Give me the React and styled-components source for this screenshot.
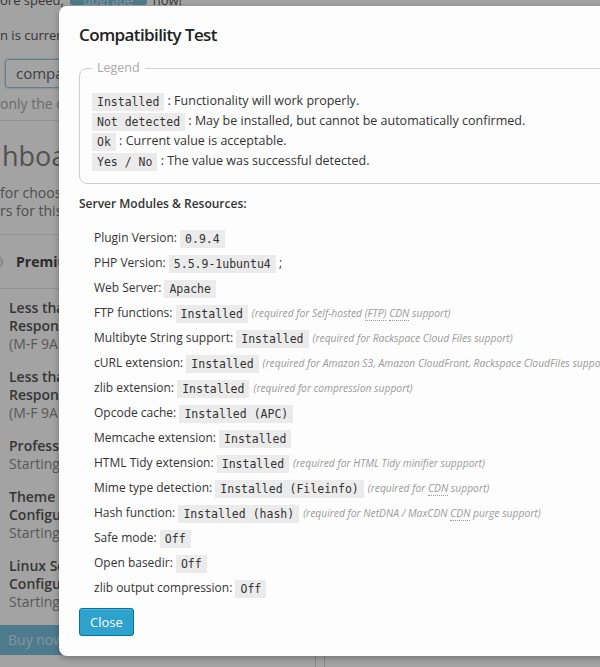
import React from 'react';
import styled, { createGlobalStyle } from 'styled-components';

const GlobalStyle = createGlobalStyle`
  html, body {
    margin: 0;
    padding: 0;
    background: #ffffff;
  }
  body {
    font-family: "Open Sans", "Liberation Sans", sans-serif;
  }
`;

// notes: plain strings, or { abbr } parts that get the dotted underline
const modules = [
  { label: 'Plugin Version:', value: '0.9.4' },
  { label: 'PHP Version:', value: '5.5.9-1ubuntu4', after: ';' },
  { label: 'Web Server:', value: 'Apache' },
  {
    label: 'FTP functions:',
    value: 'Installed',
    note: ['(required for Self-hosted ', { abbr: '(FTP)' }, ' ', { abbr: 'CDN' }, ' support)'],
  },
  {
    label: 'Multibyte String support:',
    value: 'Installed',
    note: ['(required for Rackspace Cloud Files support)'],
  },
  {
    label: 'cURL extension:',
    value: 'Installed',
    note: ['(required for Amazon S3, Amazon CloudFront, Rackspace CloudFiles support)'],
  },
  { label: 'zlib extension:', value: 'Installed', note: ['(required for compression support)'] },
  { label: 'Opcode cache:', value: 'Installed (APC)' },
  { label: 'Memcache extension:', value: 'Installed' },
  {
    label: 'HTML Tidy extension:',
    value: 'Installed',
    note: ['(required for HTML Tidy minifier suppport)'],
  },
  {
    label: 'Mime type detection:',
    value: 'Installed (Fileinfo)',
    note: ['(required for ', { abbr: 'CDN' }, ' support)'],
  },
  {
    label: 'Hash function:',
    value: 'Installed (hash)',
    note: ['(required for NetDNA / MaxCDN ', { abbr: 'CDN' }, ' purge support)'],
  },
  { label: 'Safe mode:', value: 'Off' },
  { label: 'Open basedir:', value: 'Off' },
  { label: 'zlib output compression:', value: 'Off' },
];

const legend = [
  { code: 'Installed', text: 'Functionality will work properly.' },
  { code: 'Not detected', text: 'May be installed, but cannot be automatically confirmed.' },
  { code: 'Ok', text: 'Current value is acceptable.' },
  { code: 'Yes / No', text: 'The value was successful detected.' },
];

const features = [
  { title: ['Less than 15 Minute Email Support', 'Response Time'], sub: '(M-F 9AM - 5PM EDT)' },
  { title: ['Less than 15 Minute Phone Support', 'Response Time'], sub: '(M-F 9AM - 5PM EDT)' },
  { title: ['Professional Plugin Configuration'], sub: 'Starting @ $100 USD' },
  { title: ['Theme Performance Optimization &', 'Configuration'], sub: 'Starting @ $150 USD' },
  { title: ['Linux Server Optimization &', 'Configuration'], sub: 'Starting @ $200 USD' },
];

const App = () => {
  return (
    <>
      <GlobalStyle />
      <Screen>
        {/* page behind the dialog */}
        <Page>
          <TopLine>
            <span>ore speed,</span>
            <Upgrade>upgrade</Upgrade>
            <span>now!</span>
          </TopLine>
          <PageText>n is currently enabled.</PageText>
          <FakeInput>compatibility</FakeInput>
          <Hint>only the directories listed</Hint>
          <Rule $top={6} />
          <BigTitle>hboard</BigTitle>
          <Intro>
            for choosing W3 Total Cache
            <br />
            rs for this plugin.
          </Intro>
          <Rule $top={14} />
          <BoxHead>
            <Dot />
            Premium Services
          </BoxHead>
          <Rule $top={0} />
          <Features>
            {features.map((f, i) => (
              <Feature key={i}>
                {f.title.map((t) => (
                  <strong key={t}>{t}</strong>
                ))}
                <span>{f.sub}</span>
              </Feature>
            ))}
          </Features>
          <BuyBar>Buy now</BuyBar>
          <Columns>
            <ColLeft />
            <ColRight />
          </Columns>
        </Page>

        <Overlay />

        <Dialog>
          <Title>Compatibility Test</Title>
          <Legend>
            <legend>Legend</legend>
            {legend.map((l) => (
              <LegendRow key={l.code}>
                <Code>{l.code}</Code> : {l.text}
              </LegendRow>
            ))}
          </Legend>
          <SectionHead>Server Modules &amp; Resources:</SectionHead>
          <ModuleList>
            {modules.map((m) => (
              <ModuleRow key={m.label}>
                {m.label} <Code>{m.value}</Code>
                {m.after && <> {m.after}</>}
                {m.note && (
                  <Note>
                    {m.note.map((part, i) =>
                      typeof part === 'string' ? part : <Abbr key={i}>{part.abbr}</Abbr>
                    )}
                  </Note>
                )}
              </ModuleRow>
            ))}
          </ModuleList>
          <CloseButton>Close</CloseButton>
        </Dialog>
      </Screen>
    </>
  );
};

export default App;

// styling below this line

const Screen = styled.div`
  position: relative;
  width: 600px;
  height: 667px;
  overflow: hidden;
  background: #ffffff;
`;

const Page = styled.div`
  display: flex;
  flex-direction: column;
  width: 600px;
  color: #555;
`;

const TopLine = styled.div`
  display: flex;
  align-items: flex-start;
  height: 20px;
  margin-top: -9px;
  font-size: 13px;
  line-height: 18px;
  white-space: nowrap;
  color: #555;

  span {
    margin-right: 4px;
  }
`;

const Upgrade = styled.span`
  display: inline-block;
  height: 14px;
  padding: 0 13px;
  background: #7abfde;
  color: #d6eef8;
  border-radius: 3px;
  && {
    margin-left: 2px;
    margin-right: 6px;
  }
`;

const PageText = styled.div`
  margin-top: 14px;
  font-size: 13px;
  line-height: 20px;
  white-space: nowrap;
`;

const FakeInput = styled.div`
  margin: 14px 0 0 5px;
  height: 27px;
  padding: 0 10px;
  border: 1px solid #a3c4dc;
  border-radius: 3px;
  box-shadow: 0 0 2px rgba(30, 140, 190, 0.6);
  font-size: 15px;
  line-height: 27px;
  color: #666;
`;

const Hint = styled.div`
  margin-top: 6px;
  font-size: 14px;
  line-height: 20px;
  color: #a8a8a8;
  white-space: nowrap;
`;

const Rule = styled.div`
  height: 1px;
  margin-top: ${(p) => (p.$top !== undefined ? p.$top : 4)}px;
  background: #e5e5e5;
`;

const BigTitle = styled.div`
  margin: 17px 0 0 2px;
  font-size: 27px;
  line-height: 35px;
  color: #808080;
  white-space: nowrap;
`;

const Intro = styled.div`
  margin-top: 11px;
  font-size: 14px;
  line-height: 18px;
  color: #7a7a7a;
  white-space: nowrap;
`;

const BoxHead = styled.div`
  display: flex;
  align-items: center;
  gap: 13px;
  height: 53px;
  margin-left: -11px;
  font-size: 14px;
  font-weight: 700;
  color: #444;
`;

const Dot = styled.span`
  width: 12px;
  height: 12px;
  border-radius: 50%;
  border: 1px solid #bbb;
  background: #eee;
`;

const Features = styled.div`
  display: flex;
  flex-direction: column;
  gap: 15px;
  margin-top: 10px;
  padding-left: 9px;
`;

const Feature = styled.div`
  display: flex;
  flex-direction: column;
  font-size: 14px;
  line-height: 18px;
  white-space: nowrap;

  strong {
    font-weight: 600;
    color: #555;
  }
  span {
    color: #8c8c8c;
  }
`;

const BuyBar = styled.div`
  height: 30px;
  margin-top: 14px;
  padding-left: 8px;
  background: #7abfde;
  color: #cfe9f5;
  font-size: 14px;
  line-height: 30px;
`;

const Columns = styled.div`
  display: flex;
  justify-content: space-between;
  width: 326px;
  height: 40px;
`;

const ColLeft = styled.div`
  width: 315px;
  border-right: 1px solid #d8d8d8;
`;

const ColRight = styled.div`
  width: 1px;
  border-left: 1px solid #d8d8d8;
`;

const Overlay = styled.div`
  position: absolute;
  inset: 0;
  background: rgba(0, 0, 0, 0.36);
`;

const Dialog = styled.div`
  position: absolute;
  top: 6px;
  left: 59px;
  width: 600px;
  height: 650px;
  box-sizing: border-box;
  padding: 0 20px;
  background: #fdfdfd;
  border-radius: 8px;
  box-shadow: 0 2px 6px rgba(0, 0, 0, 0.3);
  color: #333;
  font-size: 12px;
`;

const Title = styled.h2`
  margin: 17px 0 0;
  font-size: 17px;
  line-height: 24px;
  font-weight: 600;
  letter-spacing: -0.6px;
  color: #222;
`;

const Legend = styled.fieldset`
  margin: 13px 0 0;
  padding: 15px 12px 12px;
  border: 1px solid #cfcfcf;
  border-radius: 8px;

  legend {
    padding: 0 5px;
    font-size: 12.5px;
    line-height: 16px;
    color: #aaa;
  }
`;

const LegendRow = styled.div`
  font-size: 12.5px;
  line-height: 20px;
  white-space: nowrap;
`;

const Code = styled.code`
  display: inline-block;
  padding: 0 5px;
  background: #ebebeb;
  font-family: "DejaVu Sans Mono", "Liberation Mono", monospace;
  font-size: 11.5px;
  line-height: 18px;
  vertical-align: middle;
  color: #333;
`;

const SectionHead = styled.div`
  margin-top: 11px;
  font-size: 12px;
  line-height: 18px;
  font-weight: 600;
`;

const ModuleList = styled.div`
  margin-top: 12px;
  padding-left: 15px;
`;

const ModuleRow = styled.div`
  height: 25px;
  font-size: 12px;
  line-height: 25px;
  white-space: nowrap;
`;

const Note = styled.em`
  margin-left: 4px;
  font-size: 10.3px;
  color: #9a9a9a;
`;

const Abbr = styled.abbr`
  text-decoration: none;
  border-bottom: 1px dotted #999;
`;

const CloseButton = styled.button`
  display: block;
  margin-top: 8px;
  height: 28px;
  padding: 0 10px;
  background: #2ea2cc;
  border: 1px solid #0074a2;
  border-radius: 3px;
  box-shadow: inset 0 1px 0 rgba(120, 200, 230, 0.5);
  color: #fff;
  font-family: "Open Sans", sans-serif;
  font-size: 13px;
  line-height: 26px;
  cursor: pointer;
`;
